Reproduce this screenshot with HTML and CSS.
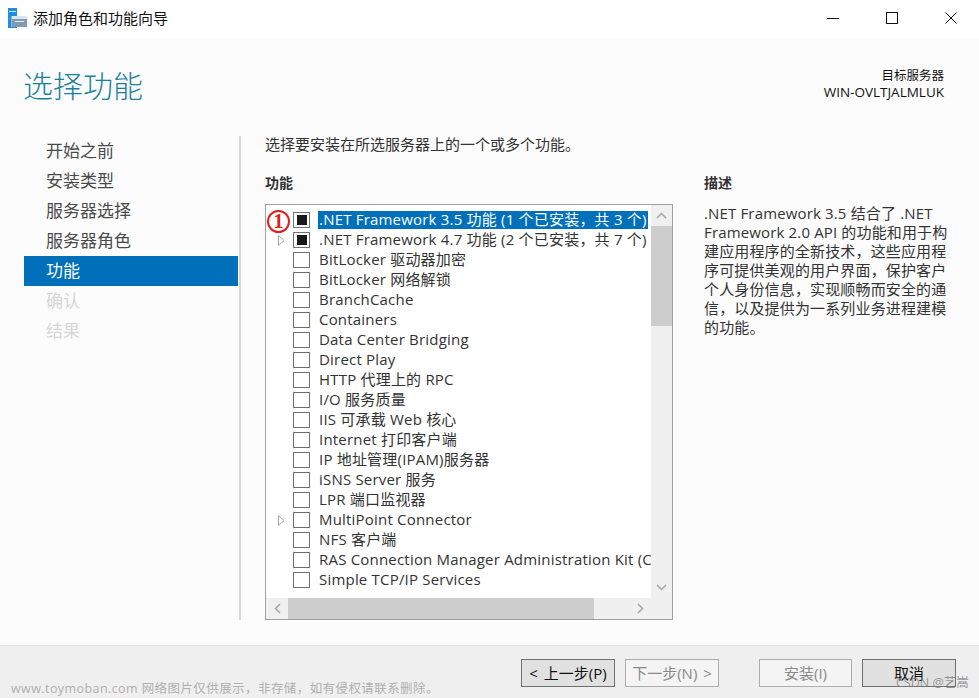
FILE: index.html
```html
<!DOCTYPE html>
<html lang="zh-CN">
<head>
<meta charset="utf-8">
<title>添加角色和功能向导</title>
<link rel="stylesheet" href="styles.css">
</head>
<body>
<div class="window">
  <header class="titlebar">
    <svg class="app-icon" width="20" height="20" viewBox="0 0 20 20">
      <rect x="0" y="0" width="9" height="20" fill="#1e8fe0"/>
      <rect x="1" y="3" width="7" height="1" fill="#cfe8fa"/>
      <rect x="3.5" y="8" width="16" height="11" fill="#dbe6ee"/>
      <rect x="4" y="11" width="15" height="8" fill="#7f9cb3"/>
      <rect x="7" y="13" width="9" height="1" fill="#e6eef4"/>
    </svg>
    <span class="title-text">添加角色和功能向导</span>
    <div class="win-controls">
      <svg class="win-btn" width="12" height="12" viewBox="0 0 12 12"><path d="M0 6.5H12" stroke="#111" fill="none"/></svg>
      <svg class="win-btn" width="12" height="12" viewBox="0 0 12 12"><rect x=".5" y=".5" width="11" height="11" stroke="#111" fill="none"/></svg>
      <svg class="win-btn" width="12" height="12" viewBox="0 0 12 12"><path d="M.5 .5L11.5 11.5M11.5 .5L.5 11.5" stroke="#111" fill="none"/></svg>
    </div>
  </header>

  <div class="body">
    <div class="heading">
      <h1>选择功能</h1>
      <div class="target">
        <div class="target-label">目标服务器</div>
        <div>WIN-OVLTJALMLUK</div>
      </div>
    </div>

    <div class="columns">
      <nav class="steps">
        <div class="step">开始之前</div>
        <div class="step">安装类型</div>
        <div class="step">服务器选择</div>
        <div class="step">服务器角色</div>
        <div class="step active">功能</div>
        <div class="step disabled">确认</div>
        <div class="step disabled">结果</div>
      </nav>

      <main class="main">
        <p class="intro">选择要安装在所选服务器上的一个或多个功能。</p>
        <div class="panes">
          <section class="features">
            <h2>功能</h2>
            <div class="listbox">
              <div class="list-area">
                <div class="rows">
                  <div class="row"><span class="twist"></span><span class="check partial"></span><span class="label selected">.NET Framework 3.5 功能 (1 个已安装，共 3 个)</span></div>
                  <div class="row"><span class="twist"><svg width="7" height="11" viewBox="0 0 7 11"><path d="M.5 .5L6 5.5L.5 10.5Z" fill="#fff" stroke="#a6a6a6"/></svg></span><span class="check partial"></span><span class="label">.NET Framework 4.7 功能 (2 个已安装，共 7 个)</span></div>
                  <div class="row"><span class="twist"></span><span class="check"></span><span class="label">BitLocker 驱动器加密</span></div>
                  <div class="row"><span class="twist"></span><span class="check"></span><span class="label">BitLocker 网络解锁</span></div>
                  <div class="row"><span class="twist"></span><span class="check"></span><span class="label">BranchCache</span></div>
                  <div class="row"><span class="twist"></span><span class="check"></span><span class="label">Containers</span></div>
                  <div class="row"><span class="twist"></span><span class="check"></span><span class="label">Data Center Bridging</span></div>
                  <div class="row"><span class="twist"></span><span class="check"></span><span class="label">Direct Play</span></div>
                  <div class="row"><span class="twist"></span><span class="check"></span><span class="label">HTTP 代理上的 RPC</span></div>
                  <div class="row"><span class="twist"></span><span class="check"></span><span class="label">I/O 服务质量</span></div>
                  <div class="row"><span class="twist"></span><span class="check"></span><span class="label">IIS 可承载 Web 核心</span></div>
                  <div class="row"><span class="twist"></span><span class="check"></span><span class="label">Internet 打印客户端</span></div>
                  <div class="row"><span class="twist"></span><span class="check"></span><span class="label">IP 地址管理(IPAM)服务器</span></div>
                  <div class="row"><span class="twist"></span><span class="check"></span><span class="label">iSNS Server 服务</span></div>
                  <div class="row"><span class="twist"></span><span class="check"></span><span class="label">LPR 端口监视器</span></div>
                  <div class="row"><span class="twist"><svg width="7" height="11" viewBox="0 0 7 11"><path d="M.5 .5L6 5.5L.5 10.5Z" fill="#fff" stroke="#a6a6a6"/></svg></span><span class="check"></span><span class="label">MultiPoint Connector</span></div>
                  <div class="row"><span class="twist"></span><span class="check"></span><span class="label">NFS 客户端</span></div>
                  <div class="row"><span class="twist"></span><span class="check"></span><span class="label">RAS Connection Manager Administration Kit (CMAK)</span></div>
                  <div class="row"><span class="twist"></span><span class="check"></span><span class="label">Simple TCP/IP Services</span></div>
                </div>
                <div class="vscroll">
                  <span class="sb-btn"><svg width="11" height="7" viewBox="0 0 11 7"><path d="M1 6L5.5 1.5L10 6" stroke="#a6a6a6" stroke-width="1.5" fill="none"/></svg></span>
                  <div class="vtrack"><div class="vthumb"></div></div>
                  <span class="sb-btn"><svg width="11" height="7" viewBox="0 0 11 7"><path d="M1 1L5.5 5.5L10 1" stroke="#a6a6a6" stroke-width="1.5" fill="none"/></svg></span>
                </div>
              </div>
              <div class="hscroll">
                <span class="sb-btn sb-h"><svg width="7" height="11" viewBox="0 0 7 11"><path d="M6 1L1.5 5.5L6 10" stroke="#a6a6a6" stroke-width="1.5" fill="none"/></svg></span>
                <div class="htrack"><div class="hthumb"></div></div>
                <span class="sb-btn sb-h"><svg width="7" height="11" viewBox="0 0 7 11"><path d="M1 1L5.5 5.5L1 10" stroke="#a6a6a6" stroke-width="1.5" fill="none"/></svg></span>
                <span class="corner"></span>
              </div>
              <div class="marker">1</div>
            </div>
          </section>
          <aside class="desc">
            <h2>描述</h2>
            <p>.NET Framework 3.5 结合了 .NET Framework 2.0 API 的功能和用于构建应用程序的全新技术，这些应用程序可提供美观的用户界面，保护客户个人身份信息，实现顺畅而安全的通信，以及提供为一系列业务进程建模的功能。</p>
          </aside>
        </div>
      </main>
    </div>
  </div>

  <footer class="footer">
    <span class="watermark">www.toymoban.com 网络图片仅供展示，非存储，如有侵权请联系删除。</span>
    <button class="btn hot">&lt; 上一步(P)</button>
    <button class="btn off next">下一步(N) &gt;</button>
    <button class="btn off install">安装(I)</button>
    <button class="btn hot cancel">取消</button>
    <span class="csdn">CSDN @艺嵩</span>
  </footer>
</div>
</body>
</html>
```

FILE: styles.css
```css
* { box-sizing: border-box; }
html, body { margin: 0; padding: 0; }
body {
  width: 979px;
  height: 698px;
  overflow: hidden;
  font-family: "Open Sans", "Noto Sans CJK SC", sans-serif;
  font-size: 14px;
  color: #1a1a1a;
  background: #fcfcfc;
}
.window { display: flex; flex-direction: column; height: 698px; }

.titlebar {
  height: 38px;
  background: #fff;
  display: flex;
  align-items: center;
  padding-left: 8px;
  flex: none;
}
.app-icon { margin-right: 5px; margin-top: -3px; }
.title-text { font-size: 15px; color: #111; margin-top: -3px; }
.win-controls { margin-left: auto; display: flex; gap: 47px; padding-right: 22px; margin-top: -3px; }

.body { flex: 1; min-height: 0; display: flex; flex-direction: column; }
.heading {
  height: 98px;
  flex: none;
  display: flex;
  justify-content: space-between;
  padding: 26px 35px 0 23px;
}
.heading h1 {
  margin: 0;
  font-size: 30px;
  font-weight: 300;
  line-height: 44px;
  color: #1b7f9f;
}
.target { font-size: 13.5px; line-height: 17px; text-align: right; padding-top: 3px; color: #111; }
.target-label { font-size: 12.5px; }

.columns { display: flex; flex: 1; min-height: 0; }
.steps {
  width: 215px;
  margin-left: 24px;
  height: 484px;
  flex: none;
}
.step {
  height: 30px;
  padding: 0 0 0 22px;
  font-size: 17px;
  line-height: 30px;
  color: #4a4a4a;
  width: 214px;
}
.step.active { background: #0070bb; color: #fff; }
.step.disabled { color: #d6d6d6; }

.main {
  padding-left: 24px;
  border-left: 2px solid #d6d6d6;
  height: 484px;
  flex: 1;
  min-width: 0;
}
.intro { margin: 0; font-size: 15px; line-height: 16px; height: 47px; color: #333; }
.panes { display: flex; }
.features { width: 408px; flex: none; margin-top: -10px; }
.features h2, .desc h2 { margin: 0; font-size: 14px; font-weight: 700; line-height: 20px; color: #333; }
.features h2 { height: 31px; }

.listbox {
  position: relative;
  width: 408px;
  height: 416px;
  background: #fff;
  border: 1px solid #a0a0a0;
  display: flex;
  flex-direction: column;
}
.list-area { display: flex; height: 393px; }
.rows { width: 385px; flex: none; padding-top: 5px; overflow: hidden; }
.row { height: 20px; display: flex; align-items: center; white-space: nowrap; }
.twist { width: 27px; flex: none; display: flex; justify-content: flex-end; padding-right: 8px; padding-left: 11px; }
.check {
  width: 17px;
  height: 16px;
  border: 1px solid #707070;
  background: #fff;
  flex: none;
  margin-right: 8px;
  display: flex;
  align-items: center;
  justify-content: center;
}
.check.partial::before { content: ""; width: 10px; height: 10px; background: #1a1a1a; }
.label { font-size: 15px; line-height: 16px; letter-spacing: .2px; color: #333; padding: 0 1px 2px; }
.label.selected { background: #0070bb; color: #fff; }

.vscroll { width: 21px; flex: none; display: flex; flex-direction: column; background: #f0f0f0; }
.sb-btn { width: 21px; height: 21px; flex: none; display: flex; align-items: center; justify-content: center; background: #f0f0f0; }
.sb-h { width: 22px; }
.vtrack { flex: 1; min-height: 0; }
.vthumb { height: 100px; background: #cdcdcd; }
.hscroll { height: 21px; display: flex; background: #f0f0f0; }
.htrack { flex: 1; min-width: 0; }
.hthumb { width: 306px; height: 21px; background: #cdcdcd; }
.corner { width: 21px; flex: none; }

.marker {
  position: absolute;
  left: 1px;
  top: 5px;
  width: 23px;
  height: 23px;
  border: 2px solid #e02020;
  border-radius: 50%;
  background: #fff;
  color: #e02020;
  font-family: "Liberation Serif", serif;
  font-weight: 700;
  font-size: 20px;
  line-height: 19px;
  text-align: center;
}

.desc { margin-left: 31px; width: 245px; margin-top: -10px; }
.desc h2 { height: 20px; }
.desc p { margin: 11px 0 0; font-size: 15px; line-height: 19px; letter-spacing: .15px; color: #333; }

.footer {
  position: relative;
  height: 53px;
  flex: none;
  background: #efefef;
  border-top: 1px solid #e2e2e2;
  display: flex;
  align-items: flex-start;
  padding: 13px 0 0 521px;
}
.btn {
  height: 28px;
  width: 94px;
  font-family: inherit;
  font-size: 15px;
  word-spacing: 2px;
  padding: 0;
  background: #f0f0f0;
  border: 1px solid #adadad;
  color: #111;
  line-height: 24px;
}
.btn.hot { background: #e1e1e1; border-color: #707070; }
.btn.off { color: #8a8a8a; background: #f4f4f4; }
.next { margin-left: 10px; }
.install { margin-left: 40px; width: 93px; }
.cancel { margin-left: 10px; }
.watermark {
  position: absolute;
  left: 11px;
  top: 35px;
  font-size: 12.5px;
  line-height: 16px;
  letter-spacing: .42px;
  color: #b0b0b0;
  white-space: nowrap;
}
.csdn {
  position: absolute;
  left: 896px;
  top: 29px;
  font-size: 12.5px;
  line-height: 16px;
  color: rgba(120,120,120,.75);
  white-space: nowrap;
}
```
